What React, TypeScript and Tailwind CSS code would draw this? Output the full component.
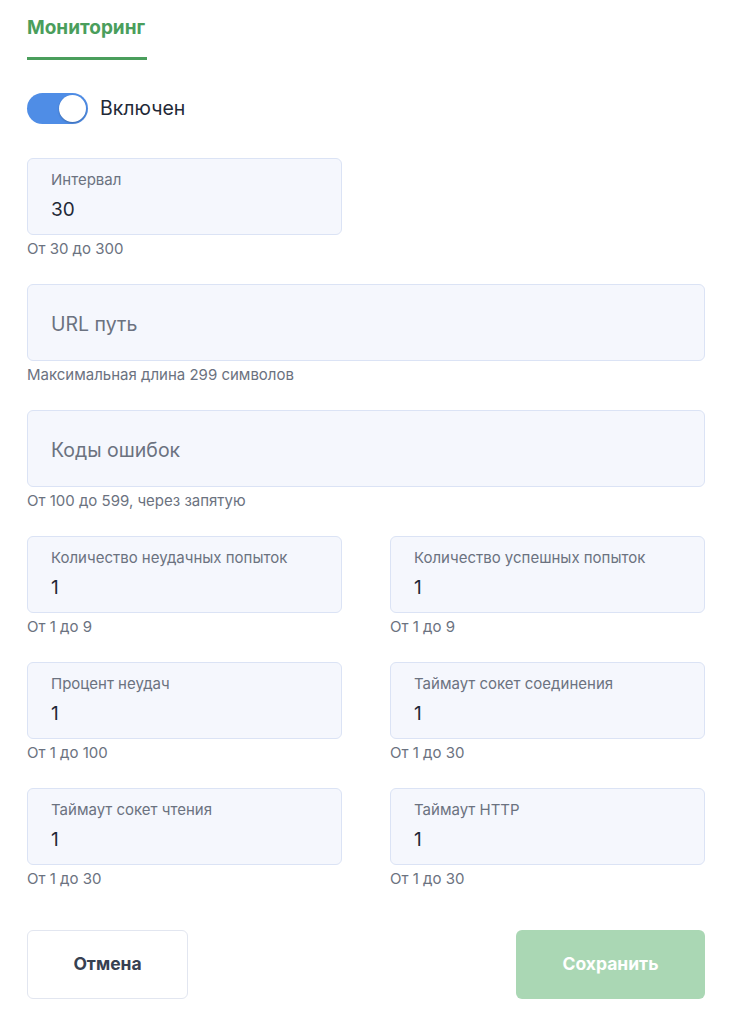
import { ReactNode } from "react";

const Field = ({ label, value, hint }: { label: string; value: string; hint: string }) => {
  return (
    <div>
      <div className="h-[77px] rounded-md border border-[#dbe3f5] bg-[#f5f7fd] px-[23px] pt-[11px]">
        <p className="text-[15px] leading-5 text-[#6b7280]">{label}</p>
        <p className="mt-[8px] text-[19px] leading-6 text-[#1f2937]">{value}</p>
      </div>
      <p className="mt-[4px] text-[15px] leading-5 text-[#6b7280]">{hint}</p>
    </div>
  );
};

const WideField = ({ placeholder, hint }: { placeholder: string; hint: string }) => {
  return (
    <div>
      <div className="flex h-[77px] items-center rounded-md border border-[#dbe3f5] bg-[#f5f7fd] px-[23px] pt-[2px]">
        <p className="text-[19.5px] leading-6 text-[#6b7280]">{placeholder}</p>
      </div>
      <p className="mt-[4px] text-[15px] leading-5 text-[#6b7280]">{hint}</p>
    </div>
  );
};

const Row = ({ children }: { children: ReactNode }) => (
  <div className="grid grid-cols-2 gap-x-[48px]">{children}</div>
);

const App = () => {
  return (
    <div
      className="min-h-[1024px] w-[743px] bg-white pl-[27px] pr-[38px] pt-4"
      style={{ fontFamily: "Inter, 'Noto Sans', sans-serif" }}
    >
      <div className="w-[120px] border-b-[3px] border-[#4a9e5c] pb-[17px]">
        <p className="text-[19px] font-bold leading-6 text-[#4a9e5c]">Мониторинг</p>
      </div>

      <div className="mt-[33px] flex items-center gap-3">
        <div className="flex h-[31px] w-[61px] items-center justify-end rounded-full bg-[#4f8de6] px-[2px]">
          <div className="h-[27px] w-[27px] rounded-full bg-white shadow-[0_1px_2px_rgba(0,0,0,0.25)]" />
        </div>
        <span className="text-[19.5px] text-[#1f2937]">Включен</span>
      </div>

      <div className="mt-[34px] flex flex-col gap-[25px]">
        <Row>
          <Field label="Интервал" value="30" hint="От 30 до 300" />
        </Row>
        <WideField placeholder="URL путь" hint="Максимальная длина 299 символов" />
        <WideField placeholder="Коды ошибок" hint="От 100 до 599, через запятую" />
        <Row>
          <Field label="Количество неудачных попыток" value="1" hint="От 1 до 9" />
          <Field label="Количество успешных попыток" value="1" hint="От 1 до 9" />
        </Row>
        <Row>
          <Field label="Процент неудач" value="1" hint="От 1 до 100" />
          <Field label="Таймаут сокет соединения" value="1" hint="От 1 до 30" />
        </Row>
        <Row>
          <Field label="Таймаут сокет чтения" value="1" hint="От 1 до 30" />
          <Field label="Таймаут HTTP" value="1" hint="От 1 до 30" />
        </Row>
      </div>

      <div className="mt-[41px] flex items-center justify-between">
        <button className="h-[69px] w-[161px] rounded-md border border-[#e2e6f0] bg-white text-[17.5px] font-bold text-[#374151]">
          Отмена
        </button>
        <button className="h-[69px] w-[189px] rounded-md bg-[#aad7b4] text-[17.5px] font-bold text-white">
          Сохранить
        </button>
      </div>
    </div>
  );
};

export default App;
